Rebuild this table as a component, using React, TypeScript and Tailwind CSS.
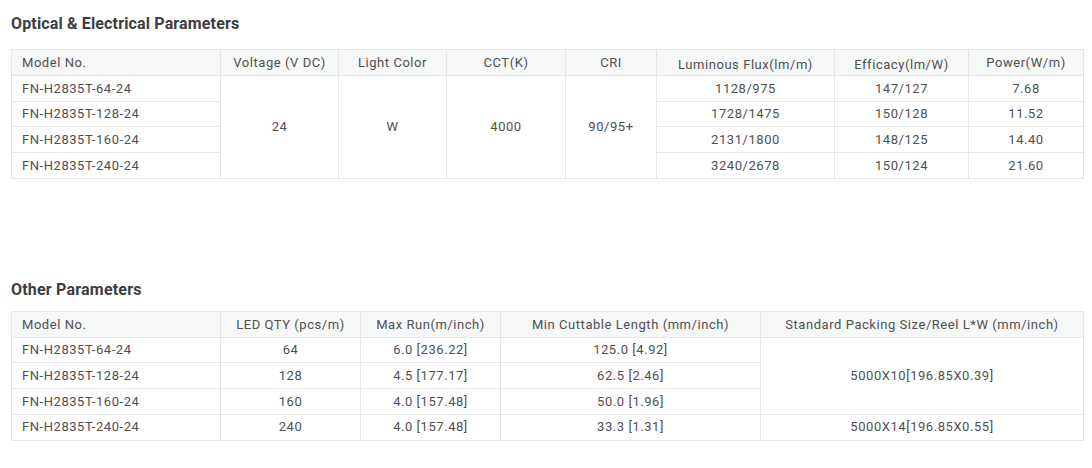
const rows1 = [
  { model: "FN-H2835T-64-24", flux: "1128/975", eff: "147/127", power: "7.68" },
  { model: "FN-H2835T-128-24", flux: "1728/1475", eff: "150/128", power: "11.52" },
  { model: "FN-H2835T-160-24", flux: "2131/1800", eff: "148/125", power: "14.40" },
  { model: "FN-H2835T-240-24", flux: "3240/2678", eff: "150/124", power: "21.60" },
];

const rows2 = [
  { model: "FN-H2835T-64-24", qty: "64", run: "6.0 [236.22]", cut: "125.0 [4.92]" },
  { model: "FN-H2835T-128-24", qty: "128", run: "4.5 [177.17]", cut: "62.5 [2.46]" },
  { model: "FN-H2835T-160-24", qty: "160", run: "4.0 [157.48]", cut: "50.0 [1.96]" },
  { model: "FN-H2835T-240-24", qty: "240", run: "4.0 [157.48]", cut: "33.3 [1.31]" },
];

const th = "border border-[#e6e6e6] bg-[#f6f7f7] font-normal h-[26px] p-0 text-center";
const td = "border border-[#e6e6e6] h-[25.7px] p-0 text-center";
const first = "text-left pl-[10px]";

export default function App() {
  return (
    <div
      className="bg-white w-[1092px] h-[468px] pl-[11px] text-[13px] text-[#505050] tracking-[0.55px]"
      style={{ fontFamily: "Roboto, 'Noto Sans', sans-serif" }}
    >
      <h2 className="pt-[14px] h-[34px] leading-[20px] text-[16px] font-bold tracking-[0.15px] text-[#3d3d3d]">
        Optical &amp; Electrical Parameters
      </h2>
      <table className="mt-[15px] w-[1072px] border-collapse table-fixed">
        <colgroup>
          <col className="w-[209px]" />
          <col className="w-[118px]" />
          <col className="w-[108px]" />
          <col className="w-[119px]" />
          <col className="w-[91px]" />
          <col className="w-[178px]" />
          <col className="w-[134px]" />
          <col className="w-[115px]" />
        </colgroup>
        <thead>
          <tr>
            <th className={`${th} ${first}`}>Model No.</th>
            <th className={th}>Voltage (V DC)</th>
            <th className={th}>Light Color</th>
            <th className={th}>CCT(K)</th>
            <th className={th}>CRI</th>
            <th className={`${th} pt-[4px]`}>Luminous Flux(lm/m)</th>
            <th className={`${th} pt-[4px]`}>Efficacy(lm/W)</th>
            <th className={th}>Power(W/m)</th>
          </tr>
        </thead>
        <tbody>
          {rows1.map((r, i) => (
            <tr key={r.model}>
              <td className={`${td} ${first}`}>{r.model}</td>
              {i === 0 && (
                <>
                  <td rowSpan={4} className={td}>24</td>
                  <td rowSpan={4} className={td}>W</td>
                  <td rowSpan={4} className={td}>4000</td>
                  <td rowSpan={4} className={td}>90/95+</td>
                </>
              )}
              <td className={td}>{r.flux}</td>
              <td className={td}>{r.eff}</td>
              <td className={td}>{r.power}</td>
            </tr>
          ))}
        </tbody>
      </table>

      <h2 className="mt-[101px] h-[20px] leading-[20px] text-[16px] font-bold tracking-[0.2px] text-[#3d3d3d]">
        Other Parameters
      </h2>
      <table className="mt-[11px] w-[1072px] border-collapse table-fixed">
        <colgroup>
          <col className="w-[209px]" />
          <col className="w-[140px]" />
          <col className="w-[140px]" />
          <col className="w-[260px]" />
          <col className="w-[323px]" />
        </colgroup>
        <thead>
          <tr>
            <th className={`${th} ${first}`}>Model No.</th>
            <th className={th}>LED QTY (pcs/m)</th>
            <th className={th}>Max Run(m/inch)</th>
            <th className={th}>Min Cuttable Length (mm/inch)</th>
            <th className={th}>Standard Packing Size/Reel L*W (mm/inch)</th>
          </tr>
        </thead>
        <tbody>
          {rows2.map((r, i) => (
            <tr key={r.model}>
              <td className={`${td} ${first}`}>{r.model}</td>
              <td className={td}>{r.qty}</td>
              <td className={td}>{r.run}</td>
              <td className={td}>{r.cut}</td>
              {i === 0 && (
                <td rowSpan={3} className={td}>5000X10[196.85X0.39]</td>
              )}
              {i === 3 && <td className={td}>5000X14[196.85X0.55]</td>}
            </tr>
          ))}
        </tbody>
      </table>
    </div>
  );
}
